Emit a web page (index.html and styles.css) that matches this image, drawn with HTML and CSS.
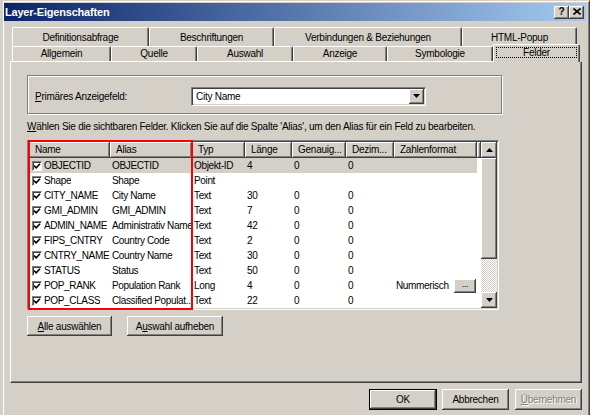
FILE: index.html
```html
<!DOCTYPE html>
<html lang="de">
<head>
<meta charset="utf-8">
<title>Layer-Eigenschaften</title>
<link rel="stylesheet" href="styles.css">
</head>
<body>
<div class="window">
  <div class="titlebar">
    <span class="title">Layer-Eigenschaften</span>
    <div class="tb-buttons">
      <span class="tb-btn help">?</span>
      <span class="tb-btn close"><svg width="8" height="7" viewBox="0 0 8 7"><path d="M0.5 0.5 L7.5 6.5 M7.5 0.5 L0.5 6.5" stroke="#000" stroke-width="1.6"/></svg></span>
    </div>
  </div>
  <div class="client">
    <div class="tabs">
      <div class="tabrow back">
        <div class="tab w137">Definitionsabfrage</div>
        <div class="tab w125">Beschriftungen</div>
        <div class="tab w188">Verbindungen &amp; Beziehungen</div>
        <div class="tab w115">HTML-Popup</div>
      </div>
      <div class="tabrow front">
        <div class="tab w99">Allgemein</div>
        <div class="tab w86">Quelle</div>
        <div class="tab w96">Auswahl</div>
        <div class="tab w94">Anzeige</div>
        <div class="tab w106">Symbologie</div>
        <div class="tab w87 sel"><span class="focus">Felder</span></div>
      </div>
    </div>
    <div class="panel">
      <div class="group">
        <span class="label"><u>P</u>rimäres Anzeigefeld:</span>
        <div class="combo">
          <span class="combo-text">City Name</span>
          <span class="combo-btn raised"><svg width="7" height="4" viewBox="0 0 7 4"><path d="M0 0 H7 L3.5 4 Z" fill="#000"/></svg></span>
        </div>
      </div>
      <p class="hint"><u>W</u>ählen Sie die sichtbaren Felder. Klicken Sie auf die Spalte 'Alias', um den Alias für ein Feld zu bearbeiten.</p>
      <div class="listwrap">
        <div class="lv">
          <div class="lv-table">
            <div class="lv-head">
              <span class="hc c1">Name</span>
              <span class="hc c2">Alias</span>
              <span class="hc c3">Typ</span>
              <span class="hc c4">Länge</span>
              <span class="hc c5">Genauig...</span>
              <span class="hc c6">Dezim...</span>
              <span class="hc c7">Zahlenformat</span>
              <span class="hc fill"></span>
            </div>
            <div class="row sel">
              <span class="c c1 name"><span class="cb"></span><span class="t">OBJECTID</span></span>
              <span class="c c2">OBJECTID</span><span class="c c3">Objekt-ID</span><span class="c c4">4</span><span class="c c5">0</span><span class="c c6">0</span><span class="c c7"></span>
            </div>
            <div class="row">
              <span class="c c1 name"><span class="cb"></span><span class="t">Shape</span></span>
              <span class="c c2">Shape</span><span class="c c3">Point</span><span class="c c4"></span><span class="c c5"></span><span class="c c6"></span><span class="c c7"></span>
            </div>
            <div class="row">
              <span class="c c1 name"><span class="cb"></span><span class="t">CITY_NAME</span></span>
              <span class="c c2">City Name</span><span class="c c3">Text</span><span class="c c4">30</span><span class="c c5">0</span><span class="c c6">0</span><span class="c c7"></span>
            </div>
            <div class="row">
              <span class="c c1 name"><span class="cb"></span><span class="t">GMI_ADMIN</span></span>
              <span class="c c2">GMI_ADMIN</span><span class="c c3">Text</span><span class="c c4">7</span><span class="c c5">0</span><span class="c c6">0</span><span class="c c7"></span>
            </div>
            <div class="row">
              <span class="c c1 name"><span class="cb"></span><span class="t">ADMIN_NAME</span></span>
              <span class="c c2">Administrativ Name</span><span class="c c3">Text</span><span class="c c4">42</span><span class="c c5">0</span><span class="c c6">0</span><span class="c c7"></span>
            </div>
            <div class="row">
              <span class="c c1 name"><span class="cb"></span><span class="t">FIPS_CNTRY</span></span>
              <span class="c c2">Country Code</span><span class="c c3">Text</span><span class="c c4">2</span><span class="c c5">0</span><span class="c c6">0</span><span class="c c7"></span>
            </div>
            <div class="row">
              <span class="c c1 name"><span class="cb"></span><span class="t">CNTRY_NAME</span></span>
              <span class="c c2">Country Name</span><span class="c c3">Text</span><span class="c c4">30</span><span class="c c5">0</span><span class="c c6">0</span><span class="c c7"></span>
            </div>
            <div class="row">
              <span class="c c1 name"><span class="cb"></span><span class="t">STATUS</span></span>
              <span class="c c2">Status</span><span class="c c3">Text</span><span class="c c4">50</span><span class="c c5">0</span><span class="c c6">0</span><span class="c c7"></span>
            </div>
            <div class="row">
              <span class="c c1 name"><span class="cb"></span><span class="t">POP_RANK</span></span>
              <span class="c c2">Population Rank</span><span class="c c3">Long</span><span class="c c4">4</span><span class="c c5">0</span><span class="c c6">0</span><span class="c c7 fmt"><span>Nummerisch</span><span class="dots raised">...</span></span>
            </div>
            <div class="row">
              <span class="c c1 name"><span class="cb"></span><span class="t">POP_CLASS</span></span>
              <span class="c c2">Classified Populat...</span><span class="c c3">Text</span><span class="c c4">22</span><span class="c c5">0</span><span class="c c6">0</span><span class="c c7"></span>
            </div>
          </div>
          <div class="lv-scroll">
            <span class="sb-btn raised"><svg width="7" height="4" viewBox="0 0 7 4"><path d="M0 4 H7 L3.5 0 Z" fill="#000"/></svg></span>
            <span class="sb-thumb raised"></span>
            <span class="sb-track"></span>
            <span class="sb-btn raised"><svg width="7" height="4" viewBox="0 0 7 4"><path d="M0 0 H7 L3.5 4 Z" fill="#000"/></svg></span>
          </div>
        </div>
        <div class="highlight"></div>
      </div>
      <div class="sel-buttons">
        <span class="btn raised w85"><u>A</u>lle auswählen</span>
        <span class="btn raised w96">A<u>u</u>swahl aufheben</span>
      </div>
    </div>
    <div class="dlg-buttons">
      <span class="default"><span class="btn raised">OK</span></span>
      <span class="btn raised w67">Abbrechen</span>
      <span class="btn raised w67 disabled"><u>Ü</u>bernehmen</span>
    </div>
  </div>
</div>
</body>
</html>
```

FILE: styles.css
```css
* { box-sizing: border-box; }
html, body { margin: 0; padding: 0; }
body {
  width: 590px;
  height: 415px;
  overflow: hidden;
  background: #d4d0c8;
  font-family: "Liberation Sans", Arial, sans-serif;
  font-size: 10px;
  letter-spacing: -0.25px;
  color: #000;
}
u { text-decoration: underline; text-underline-offset: 1px; }

.window {
  width: 590px;
  height: 415px;
  border-style: solid;
  border-width: 1px 1px 0 3px;
  border-color: #d4d0c8 #404040 #404040 #d4d0c8;
  box-shadow: inset 1px 1px #fff, inset -1px 0 #808080;
  padding: 2px 3px 0 1px;
  display: flex;
  flex-direction: column;
}

.titlebar {
  height: 18px;
  background: linear-gradient(to right, #0a246a, #a6caf0);
  display: flex;
  align-items: center;
  padding: 0 2px 0 1px;
}
.title {
  color: #fff;
  font-weight: bold;
  font-size: 11px;
  letter-spacing: -0.2px;
}
.tb-buttons { margin-left: auto; display: flex; }
.tb-btn {
  width: 15px;
  height: 13px;
  background: #d4d0c8;
  box-shadow: inset -1px -1px #404040, inset 1px 1px #fff, inset -2px -2px #808080;
  display: flex;
  align-items: center;
  justify-content: center;
  font-weight: bold;
  font-size: 10px;
  line-height: 10px;
  padding-bottom: 1px;
}

.client { padding: 6px 0 0 6px; display: flex; flex-direction: column; }

.tabs { padding-left: 2px; }
.tabrow { display: flex; }
.tabrow.back { height: 19px; }
.tabrow.front { height: 15px; }
.tab {
  border-top: 1px solid #fff;
  border-left: 1px solid #fff;
  border-right: 1px solid #404040;
  box-shadow: inset -1px 0 #808080;
  border-radius: 2px 2px 0 0;
  text-align: center;
  line-height: 12px;
  white-space: nowrap;
  background: #d4d0c8;
}
.back .tab { padding-top: 4px; }
.front .tab { padding-top: 1px; }
.tab.sel {
  margin-top: -2px;
  margin-bottom: -1px;
  position: relative;
  z-index: 1;
  padding: 2px 2px 0 2px;
}
.focus {
  display: block;
  border: 1px dotted #000;
  line-height: 9px;
}
.w137 { width: 137px; }
.w125 { width: 125px; }
.w188 { width: 188px; }
.w115 { width: 115px; }
.w99 { width: 99px; }
.w86 { width: 86px; }
.w96 { width: 96px; }
.w94 { width: 94px; }
.w106 { width: 106px; }
.w87 { width: 87px; }
.w85 { width: 85px; }
.w67 { width: 67px; }

.panel {
  width: 572px;
  height: 322px;
  border: 1px solid;
  border-color: #fff #404040 #404040 #fff;
  box-shadow: inset -1px -1px #808080;
  padding: 13px 0 0 16px;
}

.group {
  width: 475px;
  height: 39px;
  border: 1px solid #808080;
  box-shadow: inset 1px 1px #fff, 1px 1px #fff;
  display: flex;
  align-items: center;
  padding: 3px 0 0 7px;
}
.label { width: 156px; }
.combo {
  width: 235px;
  height: 19px;
  border: 1px solid;
  border-color: #808080 #fff #fff #808080;
  box-shadow: inset 1px 1px #404040, inset -1px -1px #d4d0c8;
  background: #fff;
  padding: 1px;
  display: flex;
  align-items: center;
}
.combo-text { padding-left: 3px; flex: 1; }
.combo-btn {
  width: 15px;
  height: 15px;
  display: flex;
  align-items: center;
  justify-content: center;
}

.raised {
  background: #d4d0c8;
  box-shadow: inset -1px -1px #404040, inset 1px 1px #fff, inset -2px -2px #808080;
}

.hint {
  margin: 7px 0 0 0;
  line-height: 12px;
  white-space: nowrap;
}

.listwrap { position: relative; margin-top: 7px; width: 472px; }
.lv {
  width: 472px;
  height: 170px;
  border: 1px solid;
  border-color: #808080 #fff #fff #808080;
  box-shadow: inset 1px 1px #404040, inset -1px -1px #d4d0c8;
  padding: 1px;
  background: #fff;
  display: flex;
}
.lv-table { width: 452px; letter-spacing: -0.35px; }
.lv-head { display: flex; height: 16px; letter-spacing: -0.25px; }
.hc {
  background: #d4d0c8;
  box-shadow: inset -1px -1px #404040, inset 1px 1px #fff, inset -2px -2px #808080;
  padding-left: 6px;
  line-height: 15px;
  white-space: nowrap;
  overflow: hidden;
}
.hc.fill { flex: 1; padding: 0; }
.c1 { width: 81px; }
.c2 { width: 82px; }
.c3 { width: 53px; }
.c4 { width: 47px; }
.c5 { width: 54px; }
.c6 { width: 48px; }
.c7 { width: 83px; }

.row { display: flex; height: 15px; width: 448px; line-height: 15px; }
.row.sel { background: #d4d0c8; }
.c { padding-left: 2px; white-space: nowrap; overflow: hidden; }
.c.name { padding-left: 3px; display: flex; align-items: center; gap: 2px; }
.cb {
  flex: none;
  width: 10px;
  height: 10px;
  background: #fff url("data:image/svg+xml,%3Csvg xmlns='http://www.w3.org/2000/svg' width='8' height='8' viewBox='0 0 8 8'%3E%3Cpath d='M1 3.6 L3.2 5.8 L7 1.8' fill='none' stroke='%23000' stroke-width='1.6'/%3E%3C/svg%3E") center / 8px 8px no-repeat;
  border: 1px solid;
  border-color: #808080 #fff #fff #808080;
  box-shadow: inset 1px 1px #404040;
}
.t { overflow: hidden; }
.fmt { display: flex; align-items: center; justify-content: space-between; padding-right: 1px; }
.dots {
  width: 22px;
  height: 14px;
  line-height: 11px;
  text-align: center;
  font-size: 9px;
}

.lv-scroll { width: 16px; display: flex; flex-direction: column; }
.sb-btn {
  height: 16px;
  display: flex;
  align-items: center;
  justify-content: center;
  flex: none;
}
.sb-thumb { height: 101px; flex: none; }
.sb-track {
  flex: 1;
  background: repeating-conic-gradient(#fff 0 25%, #d4d0c8 0 50%) 0 0 / 2px 2px;
}

.highlight {
  position: absolute;
  left: 1px;
  top: 0;
  width: 165px;
  height: 170px;
  border: 2px solid #f00;
  pointer-events: none;
}

.sel-buttons { display: flex; gap: 15px; margin-top: 6px; }
.btn {
  height: 20px;
  display: flex;
  align-items: center;
  justify-content: center;
  white-space: nowrap;
}
.sel-buttons .btn.w96 { width: 96px; }

.dlg-buttons {
  display: flex;
  justify-content: flex-end;
  gap: 6px;
  margin-top: 6px;
  padding-right: 4px;
}
.dlg-buttons .btn { height: 21px; }
.default {
  width: 68px;
  height: 21px;
  border: 1px solid #000;
  display: flex;
  margin-right: -1px;
}
.default .btn { flex: 1; height: 19px; }
.disabled { color: #808080; text-shadow: 1px 1px #fff; }
```
